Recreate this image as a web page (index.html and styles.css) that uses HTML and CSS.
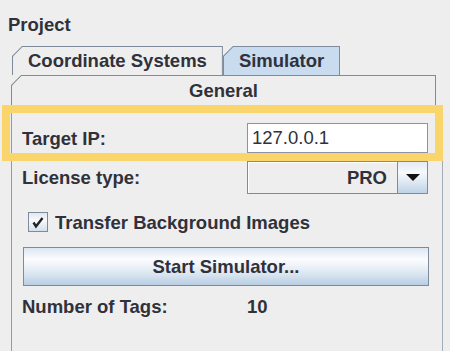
FILE: index.html
```html
<!DOCTYPE html>
<html lang="en">
<head>
    <meta charset="UTF-8">
    <meta name="viewport" content="width=device-width, initial-scale=1.0">
    <title>Project</title>
    <link rel="stylesheet" href="styles.css">
</head>
<body>
    <div class="title">Project</div>
    <div class="tabpane">
        <div class="tabs">
            <div class="tab"><div class="tab-face">Coordinate Systems</div></div>
            <div class="tab selected"><div class="tab-face">Simulator</div></div>
        </div>
        <div class="tab general"><div class="tab-face">General</div></div>
        <div class="panel">
            <div class="row highlight">
                <span class="label">Target IP:</span>
                <div class="field">127.0.0.1</div>
            </div>
            <div class="row combo-row">
                <span class="label">License type:</span>
                <div class="combo">
                    <div class="combo-value">PRO</div>
                    <div class="combo-arrow">
                        <svg width="14" height="8" viewBox="0 0 14 8"><path d="M0 0 L14 0 L7 7 Z" fill="#111"/></svg>
                    </div>
                </div>
            </div>
            <div class="row check-row">
                <span class="checkbox">
                    <svg width="14" height="14" viewBox="0 0 14 14"><path d="M2.5 7.5 L5 11.5 L11.5 3" fill="none" stroke="#222" stroke-width="2.4"/></svg>
                </span>
                <span class="label">Transfer Background Images</span>
            </div>
            <div class="row button-row">
                <div class="button">Start Simulator...</div>
            </div>
            <div class="row tags-row">
                <span class="label">Number of Tags:</span>
                <span class="label">10</span>
            </div>
        </div>
    </div>
</body>
</html>
```

FILE: styles.css
```css
* {
    box-sizing: border-box;
}
body {
    margin: 0;
    background-color: #eeeeee;
    color: #30313a;
    font-family: "Liberation Sans", Arial, sans-serif;
    font-size: 18.5px;
    font-weight: bold;
    overflow: hidden;
}
.title {
    height: 46px;
    padding: 14px 0 0 8px;
    line-height: 21px;
}
.tabpane {
    margin-left: 11px;
}
.tabs {
    display: flex;
    padding-left: 1px;
}
.tab {
    height: 29px;
    padding: 1px 1px 0 1px;
    background-color: #7f8b9b;
    clip-path: polygon(0 10px, 10px 0, 100% 0, 100% 100%, 0 100%);
}
.tab-face {
    height: 100%;
    padding: 0 15px;
    line-height: 28px;
    background-color: #eeeeee;
    clip-path: polygon(0 9.4px, 9.4px 0, 100% 0, 100% 100%, 0 100%);
}
.tab.selected .tab-face {
    background-color: #c8dbef;
}
.general {
    width: 425px;
    height: 30px;
}
.general .tab-face {
    line-height: 29px;
    text-align: center;
}
.panel {
    width: 432px;
    height: 246px;
    padding: 18px 0 0 10px;
    border-left: 1px solid #8d9bb0;
    border-right: 1px solid #a3adba;
}
.row {
    display: flex;
    align-items: center;
    line-height: 21px;
}
.label {
    white-space: nowrap;
}
.row > .label:first-child {
    width: 225px;
}
.highlight {
    position: relative;
    height: 30px;
}
.highlight::after {
    content: "";
    position: absolute;
    top: -18px;
    bottom: -8px;
    left: -20px;
    right: -1px;
    border: 8px solid #f9d56c;
    pointer-events: none;
}
.field {
    width: 181px;
    height: 30px;
    padding-left: 4px;
    line-height: 28px;
    font-weight: normal;
    background-color: #fff;
    border: 1px solid #8a94a3;
}
.combo-row {
    margin-top: 8px;
    height: 33px;
}
.combo {
    display: flex;
    width: 181px;
    height: 33px;
    border: 1px solid #7f8b9b;
}
.combo-value {
    flex: 1;
    padding-right: 10px;
    line-height: 31px;
    text-align: right;
    background-color: #eeeeee;
    box-shadow: inset 1px 1px #fff;
    border-right: 1px solid #7f8b9b;
}
.combo-arrow {
    width: 29px;
    display: flex;
    align-items: center;
    justify-content: center;
    background: linear-gradient(to bottom, #e3ebf5, #f7f9fc 35%, #d9e5f1 70%, #bfd2e7);
}
.check-row {
    margin-top: 18px;
    height: 20px;
    padding-left: 6px;
    gap: 7px;
}
.checkbox {
    width: 20px;
    height: 20px;
    display: flex;
    align-items: center;
    justify-content: center;
    border: 1px solid #7f8b9b;
    background: linear-gradient(to bottom, #dfe8f3, #f8fafd 40%, #d3e0ee);
}
.check-row .label {
    width: auto;
}
.button-row {
    margin-top: 15px;
    padding-left: 1px;
}
.button {
    width: 406px;
    height: 39px;
    line-height: 37px;
    text-align: center;
    border: 1px solid #7f8b9b;
    background: linear-gradient(to bottom, #dbe6f2 0%, #fbfcfe 30%, #f1f5fa 45%, #d8e4f0 72%, #b8cde3 100%);
}
.tags-row {
    margin-top: 10px;
}
```
